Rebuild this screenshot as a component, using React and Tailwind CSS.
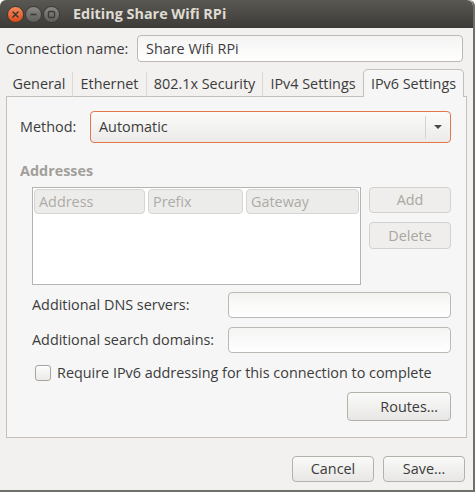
import React, { useState } from 'react';

const font = { fontFamily: '"Open Sans", "DejaVu Sans", sans-serif' };

function TitleButton({ kind }) {
  if (kind === 'close') {
    return (
      <div className="w-[17px] h-[17px] rounded-full bg-gradient-to-b from-[#f58a5a] to-[#dd4814] border border-[#3a3935] flex items-center justify-center">
        <svg width="9" height="9" viewBox="0 0 9 9">
          <path d="M2 2 L7 7 M7 2 L2 7" stroke="#3c3b37" strokeWidth="1.6" strokeLinecap="round" />
        </svg>
      </div>
    );
  }
  return (
    <div className="w-[17px] h-[17px] rounded-full bg-gradient-to-b from-[#8a8984] to-[#5f5e5a] border border-[#3a3935] flex items-center justify-center">
      <svg width="9" height="9" viewBox="0 0 9 9">
        {kind === 'min' ? (
          <path d="M1.5 4.5 L7.5 4.5" stroke="#3c3b37" strokeWidth="1.6" />
        ) : (
          <rect x="1.5" y="1.5" width="6" height="6" rx="1" fill="none" stroke="#3c3b37" strokeWidth="1.4" />
        )}
      </svg>
    </div>
  );
}

function Btn({ children, className = '', disabled }) {
  return (
    <button
      className={`h-full rounded-[4px] border text-[14.4px] ${
        disabled
          ? 'border-[#d3d1cd] bg-[#efeeec] text-[#aaa6a0]'
          : 'border-[#b4b1ab] bg-gradient-to-b from-[#fafaf9] to-[#e8e7e5] text-[#3c3c3c]'
      } ${className}`}
    >
      {children}
    </button>
  );
}

function TextInput({ value, className = '' }) {
  return (
    <div className={`rounded-[4px] border border-[#bcb9b4] bg-gradient-to-b from-[#f4f4f3] to-[#ffffff] flex items-center px-[8px] text-[14.4px] text-[#3c3c3c] ${className}`}>
      {value}
    </div>
  );
}

export default function App() {
  const [tab] = useState('IPv6 Settings');
  const tabs = [
    ['General', 'w-[66px]'],
    ['Ethernet', 'w-[74px]'],
    ['802.1x Security', 'w-[116px]'],
    ['IPv4 Settings', 'w-[101px]'],
  ];

  return (
    <div style={font} className="w-[475px] h-[492px] bg-white">
      <div className="w-[473px] h-[490px] bg-[#f2f1f0] flex flex-col border-r-2 border-b-2 border-[#6e6e6b] box-content rounded-t-[6px]">
        {/* title bar */}
        <div className="h-[28px] rounded-t-[6px] bg-gradient-to-b from-[#5a5853] to-[#3c3b37] flex items-center pl-[7px]">
          <div className="flex items-center gap-[1px]">
            <TitleButton kind="close" />
            <TitleButton kind="min" />
            <TitleButton kind="max" />
          </div>
          <span className="ml-[13px] text-[14.4px] font-bold text-[#dfdbd2]">Editing Share Wifi RPi</span>
        </div>

        {/* connection name */}
        <div className="flex items-center mt-[7px] pl-[6px] h-[27px]">
          <span className="w-[131px] text-[14.4px] text-[#3c3c3c]">Connection name:</span>
          <TextInput value="Share Wifi RPi" className="w-[326px] h-[27px]" />
        </div>

        {/* tabs */}
        <div className="flex items-end mt-[7px] ml-[6px] h-[28px]">
          {tabs.map(([t, w], i) => (
            <div
              key={t}
              className={`${w} h-[25px] flex items-center justify-center text-[14.4px] text-[#3c3c3c] border-b border-[#c3c0bb] ${
                i > 0 ? 'border-l border-l-[#dcd9d4]' : ''
              }`}
            >
              {t}
            </div>
          ))}
          <div className="w-[101px] h-[28px] flex items-center justify-center text-[14.4px] text-[#3c3c3c] bg-[#f6f6f6] rounded-t-[5px] border border-b-0 border-[#c3c0bb]">
            {tab}
          </div>
          <div className="w-[3px] h-[25px] border-b border-[#c3c0bb]" />
        </div>

        {/* panel */}
        <div className="ml-[6px] w-[461px] h-[341px] bg-[#f6f6f6] border border-t-0 border-[#c3c0bb] flex flex-col pl-[13px] pr-[15px]">
          <div className="flex items-center mt-[14px] h-[32px]">
            <span className="w-[70px] text-[14.4px] text-[#3c3c3c]">Method:</span>
            <div className="w-[361px] h-[32px] rounded-[4px] border border-[#e0784b] bg-gradient-to-b from-[#fbfbfa] to-[#ecebe9] flex items-center pl-[8px]">
              <span className="flex-1 text-[14.4px] text-[#3c3c3c]">Automatic</span>
              <div className="w-px h-[22px] bg-[#d6d3ce]" />
              <svg width="24" height="10" viewBox="0 0 24 10">
                <path d="M8 3 L16 3 L12 7 Z" fill="#4a4a4a" />
              </svg>
            </div>
          </div>

          <div className="mt-[19px] text-[14.4px] font-bold text-[#a29f9a] leading-[17px]">Addresses</div>

          <div className="flex mt-[8px] ml-[12px]">
            <div className="w-[329px] h-[98px] bg-white border border-[#b6b4b0] p-px">
              <div className="flex gap-[3px] h-[25px]">
                <div className="w-[111px] rounded-[4px] border border-[#d6d5d3] bg-[#ececeb] text-[14.4px] text-[#aeaba6] flex items-center pl-[4px]">Address</div>
                <div className="w-[95px] rounded-[4px] border border-[#d6d5d3] bg-[#ececeb] text-[14.4px] text-[#aeaba6] flex items-center pl-[4px]">Prefix</div>
                <div className="w-[113px] rounded-[4px] border border-[#d6d5d3] bg-[#ececeb] text-[14.4px] text-[#aeaba6] flex items-center pl-[4px]">Gateway</div>
              </div>
            </div>
            <div className="ml-[8px] flex flex-col gap-[9px]">
              <div className="h-[26px] w-[82px]"><Btn disabled className="w-full">Add</Btn></div>
              <div className="h-[27px] w-[82px]"><Btn disabled className="w-full">Delete</Btn></div>
            </div>
          </div>

          <div className="flex items-center mt-[7px] ml-[12px] h-[26px]">
            <span className="w-[196px] text-[14.4px] text-[#3c3c3c]">Additional DNS servers:</span>
            <TextInput value="" className="w-[223px] h-[26px]" />
          </div>
          <div className="flex items-center mt-[9px] ml-[12px] h-[26px]">
            <span className="w-[196px] text-[14.4px] text-[#3c3c3c]">Additional search domains:</span>
            <TextInput value="" className="w-[223px] h-[26px]" />
          </div>

          <div className="flex items-center mt-[12px] ml-[15px] h-[16px]">
            <div className="w-[16px] h-[16px] rounded-[3px] border border-[#a7a49f] bg-gradient-to-b from-[#fdfdfd] to-[#ebeae8]" />
            <span className="ml-[6px] text-[14.4px] text-[#3c3c3c]">Require IPv6 addressing for this connection to complete</span>
          </div>

          <div className="flex justify-end mt-[11px] h-[29px]">
            <div className="w-[104px] h-[29px]"><Btn className="w-full text-right pr-[12px]">Routes…</Btn></div>
          </div>
        </div>

        {/* dialog buttons */}
        <div className="flex justify-end gap-[9px] mt-[18px] pr-[8px] h-[26px]">
          <div className="w-[82px] h-[26px]"><Btn className="w-full">Cancel</Btn></div>
          <div className="w-[82px] h-[26px]"><Btn className="w-full">Save…</Btn></div>
        </div>
      </div>
    </div>
  );
}
